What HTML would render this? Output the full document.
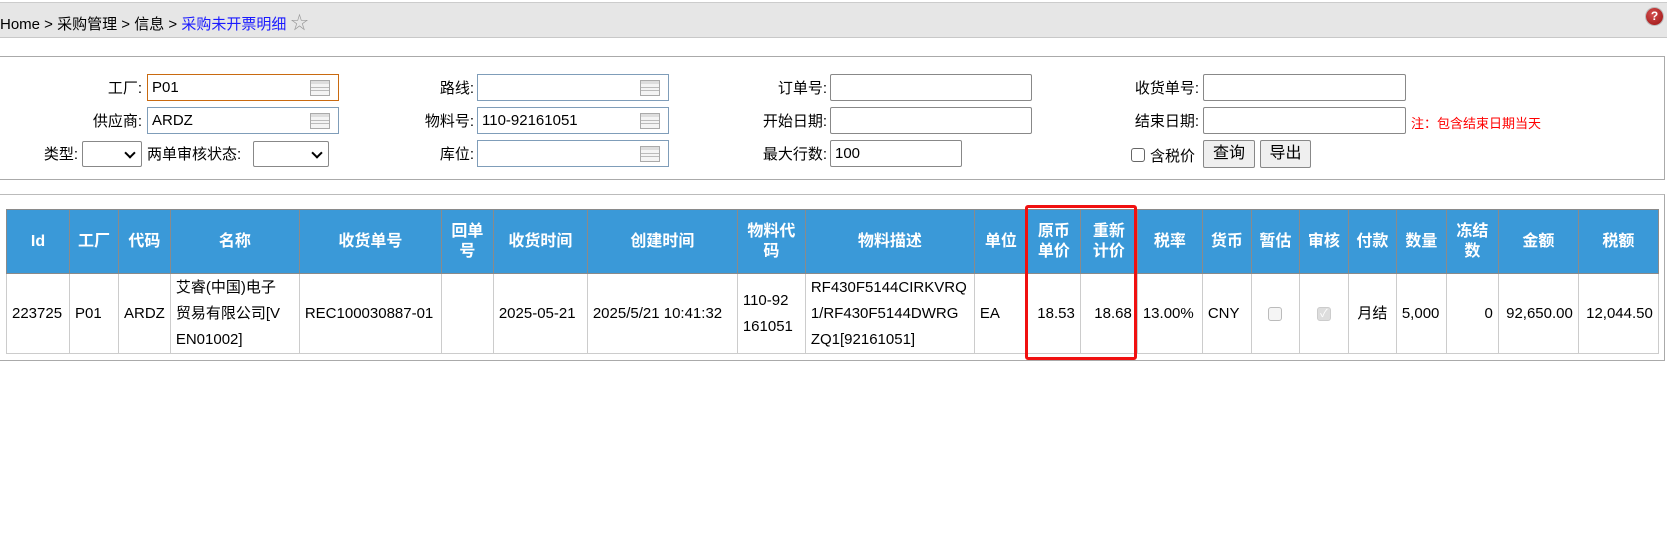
<!DOCTYPE html>
<html><head><meta charset="utf-8">
<style>
*{box-sizing:border-box;margin:0;padding:0}
body{width:1672px;height:534px;background:#fff;font-family:"Liberation Sans","Noto Sans CJK SC",sans-serif;font-size:15px;color:#000;position:relative;overflow:hidden}
.bar{position:absolute;left:0;top:2px;width:1667px;height:36px;background:#e6e6e6;border-top:1px solid #ccc;border-bottom:1px solid #c8c8c8}
.crumb{position:absolute;left:0;top:9px;font-size:15px;white-space:nowrap}
.crumb .cur{color:#1a1aff}
.help{position:absolute;left:1646px;top:8px;width:17px;height:17px;border-radius:50%;background:radial-gradient(circle at 40% 35%,#d45050,#9a1010);color:#fff;font-weight:bold;font-size:12px;text-align:center;line-height:17px;box-shadow:0 0 0 1px #bbb}
.fbox{position:absolute;left:-1px;top:56px;width:1666px;height:124px;border:1px solid #aaa;border-left:none}
.lbl{position:absolute;text-align:right;white-space:nowrap;font-size:15px}
.in{position:absolute;height:27px;border:1px solid #7f9db9;background:#fff;font-size:15px;padding:3px 4px;line-height:19px}
.in.g{border-color:#888;border-radius:2px}
.ico{position:absolute;right:8px;top:5px;width:20px;height:16px;border:1px solid #aaa;background:linear-gradient(#ddd 0 3px,#f4f4f4 3px 6px,#bbb 6px 7px,#f4f4f4 7px 9px,#bbb 9px 10px,#f4f4f4 10px)}
.sel{position:absolute;height:26px;border:1px solid #888;border-radius:2px;background:#fff}
.sel:after{content:"";position:absolute;right:7px;top:7px;width:6px;height:6px;border-right:2px solid #000;border-bottom:2px solid #000;transform:rotate(45deg)}
.btn{position:absolute;height:28px;border:1px solid #888;border-radius:2px;background:#efefef;font-size:16px;text-align:center;line-height:26px}
.tbox{position:absolute;left:-1px;top:194px;width:1666px;height:167px;border:1px solid #aaa;border-left:none;border-top:1px solid #bbb}
table{position:absolute;left:6px;top:209px;border-collapse:collapse;table-layout:fixed}
th{background:#3a99d8;color:#fff;font-weight:bold;height:64px;border:1px solid #8a8a8a;font-size:16px;line-height:20px;text-align:center;padding:0 2px}
td{height:80px;border:1px solid #ccc;font-size:15px;line-height:26px;padding:0 5px;text-align:left;white-space:nowrap}
td.r{text-align:right}td.c{text-align:center}
.cb{display:inline-block;width:14px;height:14px;border:1px solid #bbb;border-radius:3px;background:#f5f5f5;vertical-align:middle}
.red{position:absolute;left:1025px;top:205px;width:112px;height:155px;border:3px solid #f01010;border-radius:3px}
</style></head><body>
<div class="bar"></div>
<div class="crumb">Home &gt; 采购管理 &gt; 信息 &gt; <span class="cur">采购未开票明细</span> <span style="color:#999;font-size:18px">☆</span></div>
<div class="help">?</div>

<div class="fbox"></div>
<div class="lbl" style="right:1530px;top:77px">工厂:</div>
<div class="in" style="left:147px;top:74px;width:192px;border-color:#c96a10">P01<span class="ico"></span></div>
<div class="lbl" style="right:1530px;top:110px">供应商:</div>
<div class="in" style="left:147px;top:107px;width:192px">ARDZ<span class="ico"></span></div>
<div class="lbl" style="right:1594px;top:143px">类型:</div>
<div class="sel" style="left:82px;top:141px;width:60px"></div>
<div class="lbl" style="left:147px;top:143px">两单审核状态:</div>
<div class="sel" style="left:253px;top:141px;width:76px"></div>

<div class="lbl" style="right:1198px;top:77px">路线:</div>
<div class="in" style="left:477px;top:74px;width:192px"><span class="ico"></span></div>
<div class="lbl" style="right:1198px;top:110px">物料号:</div>
<div class="in" style="left:477px;top:107px;width:192px">110-92161051<span class="ico"></span></div>
<div class="lbl" style="right:1198px;top:143px">库位:</div>
<div class="in" style="left:477px;top:140px;width:192px"><span class="ico"></span></div>

<div class="lbl" style="right:845px;top:77px">订单号:</div>
<div class="in g" style="left:830px;top:74px;width:202px"></div>
<div class="lbl" style="right:845px;top:110px">开始日期:</div>
<div class="in g" style="left:830px;top:107px;width:202px"></div>
<div class="lbl" style="right:845px;top:143px">最大行数:</div>
<div class="in g" style="left:830px;top:140px;width:132px">100</div>

<div class="lbl" style="right:473px;top:77px">收货单号:</div>
<div class="in g" style="left:1203px;top:74px;width:203px"></div>
<div class="lbl" style="right:473px;top:110px">结束日期:</div>
<div class="in g" style="left:1203px;top:107px;width:203px"></div>
<div class="lbl" style="left:1411px;top:113px;color:#f00;font-size:13px">注：包含结束日期当天</div>
<div style="position:absolute;left:1131px;top:148px;width:14px;height:14px;border:1px solid #666;border-radius:3px;background:#fff"></div>
<div class="lbl" style="left:1150px;top:145px">含税价</div>
<div class="btn" style="left:1203px;top:140px;width:52px">查询</div>
<div class="btn" style="left:1260px;top:140px;width:51px">导出</div>

<div class="tbox"></div>
<table>
<colgroup>
<col style="width:63px"><col style="width:49px"><col style="width:51px"><col style="width:129px"><col style="width:142px"><col style="width:52px"><col style="width:94px"><col style="width:150px"><col style="width:68px"><col style="width:169px"><col style="width:53px"><col style="width:53px"><col style="width:57px"><col style="width:65px"><col style="width:49px"><col style="width:48px"><col style="width:49px"><col style="width:48px"><col style="width:50px"><col style="width:52px"><col style="width:80px"><col style="width:80px">
</colgroup>
<tr><th>Id</th><th>工厂</th><th>代码</th><th>名称</th><th>收货单号</th><th>回单<br>号</th><th>收货时间</th><th>创建时间</th><th>物料代<br>码</th><th>物料描述</th><th>单位</th><th>原币<br>单价</th><th>重新<br>计价</th><th>税率</th><th>货币</th><th>暂估</th><th>审核</th><th>付款</th><th>数量</th><th>冻结<br>数</th><th>金额</th><th>税额</th></tr>
<tr><td>223725</td><td>P01</td><td>ARDZ</td><td>艾睿(中国)电子<br>贸易有限公司[V<br>EN01002]</td><td>REC100030887-01</td><td></td><td>2025-05-21</td><td>2025/5/21 10:41:32</td><td>110-92<br>161051</td><td>RF430F5144CIRKVRQ<br>1/RF430F5144DWRG<br>ZQ1[92161051]</td><td>EA</td><td class="r">18.53</td><td class="r">18.68</td><td>13.00%</td><td>CNY</td><td class="c"><span class="cb"></span></td><td class="c"><span class="cb" style="background:#ddd;border-color:#ccc;color:#fff;font-size:11px;line-height:12px">✓</span></td><td class="c">月结</td><td>5,000</td><td class="r">0</td><td class="r">92,650.00</td><td class="r">12,044.50</td></tr>
</table>
<div class="red"></div>
</body></html>
